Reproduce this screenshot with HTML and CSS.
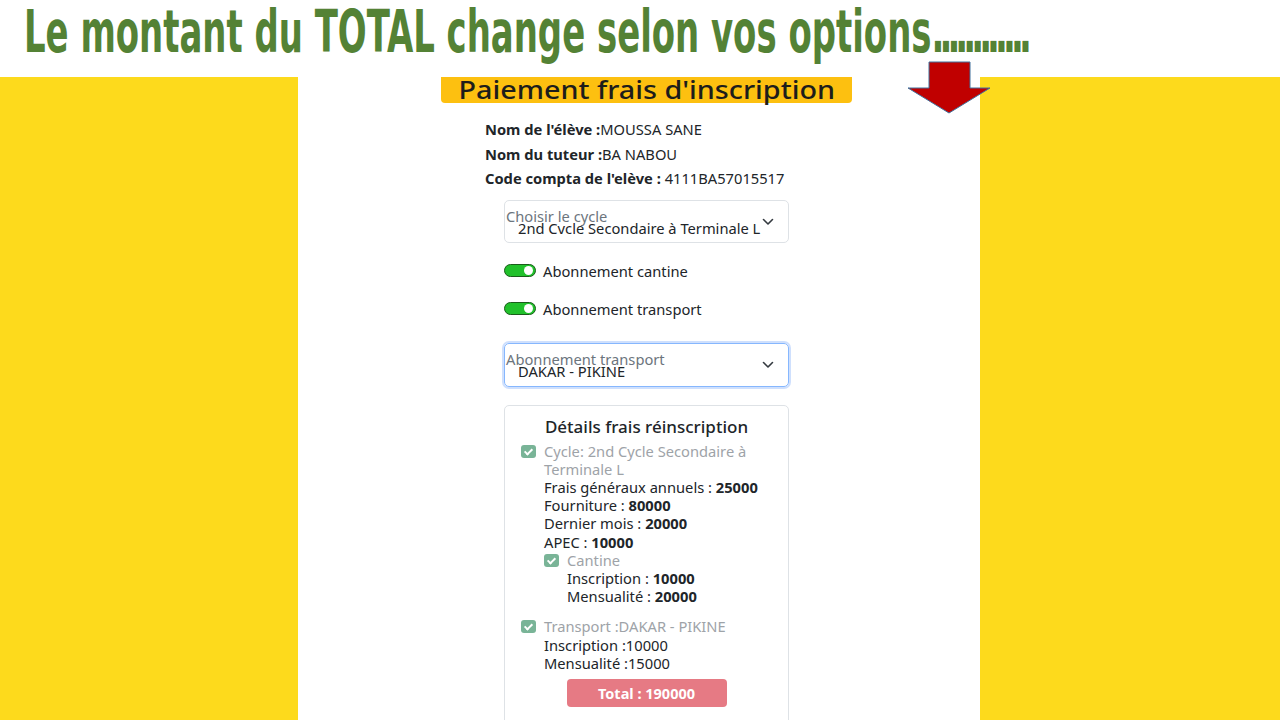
FILE: index.html
```html
<!DOCTYPE html>
<html lang="fr">
<head>
<meta charset="utf-8" />
<title>Paiement frais d'inscription</title>
<link rel="stylesheet" href="styles.css">
</head>
<body>
<div class="banner">
  <h1 class="slide-title"><span>Le montant du TOTAL change selon vos options<i class="dots">............</i></span></h1>
</div>

<!-- fleche rouge -->
<svg class="arrow" width="86" height="54" viewBox="0 0 86 54">
  <polygon points="23,1 64,1 64,27 84,27 43,52 2,27 23,27" fill="#c00000" stroke="#41719c" stroke-width="1"/>
</svg>

<div class="stage">
  <div class="panel">
    <div class="page-title"><span>Paiement frais d'inscription</span></div>

    <div class="form">
      <p class="info"><b>Nom de l'élève :</b>MOUSSA SANE</p>
      <p class="info"><b>Nom du tuteur :</b>BA NABOU</p>
      <p class="info"><b>Code compta de l'elève :</b> 4111BA57015517</p>

      <div class="field">
        <span class="field-label">Choisir le cycle</span>
        <span class="field-value">2nd Cycle Secondaire à Terminale L</span>
        <svg class="chevron" width="12" height="8" viewBox="0 0 12 8"><path d="M1.5 1.5 6 6l4.5-4.5" fill="none" stroke="#343a40" stroke-width="1.6" stroke-linecap="round" stroke-linejoin="round"/></svg>
      </div>

      <label class="switch-row"><span class="switch"></span>Abonnement cantine</label>
      <label class="switch-row"><span class="switch"></span>Abonnement transport</label>

      <div class="field focused">
        <span class="field-label">Abonnement transport</span>
        <span class="field-value">DAKAR - PIKINE</span>
        <svg class="chevron" width="12" height="8" viewBox="0 0 12 8"><path d="M1.5 1.5 6 6l4.5-4.5" fill="none" stroke="#343a40" stroke-width="1.6" stroke-linecap="round" stroke-linejoin="round"/></svg>
      </div>

      <div class="card">
        <h2 class="card-title">Détails frais réinscription</h2>

        <div class="check-row"><span class="check"></span><span class="muted">Cycle: 2nd Cycle Secondaire à Terminale L</span></div>
        <div class="sub">
          <p>Frais généraux annuels : <b>25000</b></p>
          <p>Fourniture : <b>80000</b></p>
          <p>Dernier mois : <b>20000</b></p>
          <p>APEC : <b>10000</b></p>
          <div class="check-row"><span class="check"></span><span class="muted">Cantine</span></div>
          <div class="sub">
            <p>Inscription : <b>10000</b></p>
            <p>Mensualité : <b>20000</b></p>
          </div>
        </div>

        <div class="check-row gap"><span class="check"></span><span class="muted">Transport :DAKAR - PIKINE</span></div>
        <div class="sub">
          <p>Inscription :10000</p>
          <p>Mensualité :15000</p>
        </div>

        <div class="total">Total : 190000</div>
      </div>
    </div>
  </div>
</div>
</body>
</html>
```

FILE: styles.css
```css
*{ margin:0; padding:0; box-sizing:border-box;}
html,body{ height:100%;}
body{
  background:#fdda1c;
  font-family:"Noto Sans","Open Sans",sans-serif;
  font-size:14.7px;
  color:#212529;
  overflow:hidden;
}

/* bandeau du haut */
.banner{ height:77px; background:#fff; padding:3px 0 0 24px; overflow:hidden;}
.slide-title{
  font-family:"DejaVu Sans",sans-serif;
  font-stretch:condensed;
  font-weight:bold;
  font-size:58px;
  line-height:58px;
  color:#548235;
  white-space:nowrap;
}
.slide-title span{ display:inline-block; transform:scaleX(0.65); transform-origin:left center;}
.slide-title .dots{ font-style:normal; letter-spacing:-7.6px;}

.arrow{ position:absolute; left:906px; top:61px;}

/* panneau blanc */
.stage{ height:calc(100% - 77px);}
.panel{ width:682px; height:100%; margin-left:298px; background:#fff;}

.page-title{
  margin-left:143px;
  width:411px;
  height:26px;
  background:#fdc010;
  border-radius:0 0 4px 4px;
  font-size:25px;
  font-weight:500;
  line-height:25px;
  text-align:center;
  color:#1d1d1b;
}
.page-title span{ display:inline-block; transform:scaleX(1.15);}

.form{ padding:17px 0 0 187px; width:520px;}
.info{ height:24.5px; line-height:18px; white-space:nowrap;}
.info b{ font-weight:700;}

.field{
  position:relative;
  margin:6px 0 0 19px;
  width:285px;
  height:43px;
  border:1px solid #dee2e6;
  border-radius:5px;
  padding:9px 0 0 1px;
  line-height:12px;
}
.field-label{ display:block; color:#6c757d; white-space:nowrap;}
.field-value{ display:block; padding-left:12px; width:270px; white-space:nowrap; overflow:hidden;}
.chevron{ position:absolute; right:14px; top:17px;}

.field.focused{
  margin-top:22px;
  height:44px;
  border-color:#86b7fe;
  box-shadow:0 0 0 2px #cfe0fd;
}

.switch-row{ display:flex; align-items:center; margin:16px 0 0 19px; height:24px;}
.switch-row + .switch-row{ margin-top:14px;}
.switch{
  position:relative;
  width:32px;
  height:13px;
  margin-right:7px;
  border:1px solid #1a5d1a;
  border-radius:7px;
  background:#21c12b;
}
.switch:after{
  content:"";
  position:absolute;
  right:2px;
  top:1px;
  width:9px;
  height:9px;
  border-radius:50%;
  background:#fff;
}

/* carte details */
.card{
  margin:18px 0 0 19px;
  width:285px;
  height:330px;
  border:1px solid #dee2e6;
  border-radius:5px;
  padding:9px 16px 0 16px;
  line-height:18.2px;
}
.card-title{ font-size:17px; font-weight:500; text-align:center; line-height:24px; margin-bottom:3px; white-space:nowrap;}
.check-row{ display:flex;}
.check-row.gap{ margin-top:12px;}
.check{
  position:relative;
  flex:none;
  width:15px;
  height:13px;
  margin:3px 8px 0 0;
  border-radius:3px;
  background:#79b497;
}
.check:after{
  content:"";
  position:absolute;
  left:5px;
  top:2px;
  width:3px;
  height:6px;
  border:solid #fff;
  border-width:0 2px 2px 0;
  transform:rotate(45deg);
}
.muted{ color:#9ea3a8;}
.sub{ padding-left:23px;}
.sub p{ white-space:nowrap;}
.sub p b{ font-weight:700;}

.total{
  margin:7px auto 0;
  width:160px;
  height:28px;
  border-radius:4px;
  background:#e67a84;
  color:#fff;
  font-size:14.5px;
  font-weight:700;
  text-align:center;
  line-height:28px;
}
```
